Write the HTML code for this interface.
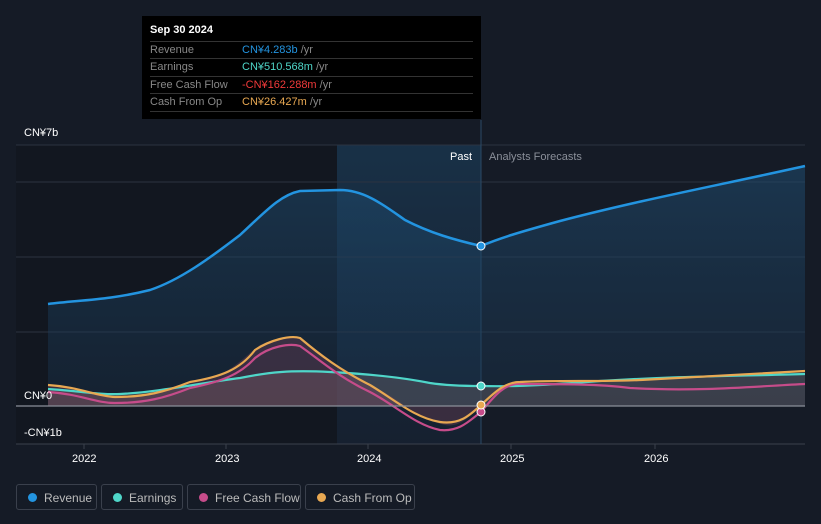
<!DOCTYPE html>
<html><head><meta charset="utf-8"><style>
body{margin:0;background:#151b26;width:821px;height:524px;overflow:hidden;font-family:"Liberation Sans",sans-serif}
svg{position:absolute;left:0;top:0}
.tt{position:absolute;left:142px;top:16px;width:339px;height:103px;background:#000;color:#fff;font-size:11px}
.tt .h{position:absolute;left:8px;top:8px;font-weight:bold;font-size:11px}
.row{position:absolute;left:8px;width:323px;height:17px;border-top:1px solid #333;color:#888;line-height:17px}
.row span{position:absolute;left:92px}
.lg{position:absolute;top:484px;height:26px;border:1px solid #3a404c;border-radius:3px;color:#bbb;font-size:12px;line-height:26px;box-sizing:border-box}
.lg i{position:absolute;left:11px;top:8px;width:9px;height:9px;border-radius:50%}
.lg b{font-weight:normal;position:absolute;left:27px}
</style></head><body>
<svg width="821" height="524">
<defs>
<linearGradient id="pg" x1="0" y1="0" x2="0" y2="1"><stop offset="0" stop-color="#1a3a55" stop-opacity=".7"/><stop offset="1" stop-color="#16263a" stop-opacity=".5"/></linearGradient>
<linearGradient id="rv" x1="0" y1="0" x2="0" y2="1"><stop offset="0" stop-color="#1f4c70" stop-opacity=".55"/><stop offset="1" stop-color="#1a3550" stop-opacity=".35"/></linearGradient>
</defs>
<rect x="16" y="145" width="321" height="299" fill="#121720"/>
<rect x="337" y="145" width="144" height="299" fill="url(#pg)"/>
<g stroke="#2c3340" stroke-width="1">
<line x1="16" y1="145" x2="805" y2="145"/><line x1="16" y1="182" x2="805" y2="182"/>
<line x1="16" y1="257" x2="805" y2="257"/><line x1="16" y1="332" x2="805" y2="332"/>
<line x1="16" y1="444" x2="805" y2="444" stroke="#3a404c"/>
</g>
<line x1="481" y1="120" x2="481" y2="444" stroke="#2a4a66"/>
<path d="M48,304 C80,300 110,300 150,290 C180,280 210,258 240,235 C265,212 280,195 300,191 L340,190 C365,190 385,206 405,220 C430,233 455,240 481,246 C500,238 520,232 560,221 C640,200 720,185 805,166 L805,406 L48,406Z" fill="url(#rv)"/>
<path d="M48,304 C80,300 110,300 150,290 C180,280 210,258 240,235 C265,212 280,195 300,191 L340,190 C365,190 385,206 405,220 C430,233 455,240 481,246 C500,238 520,232 560,221 C640,200 720,185 805,166" fill="none" stroke="#2394e0" stroke-width="2.5"/>
<path d="M48,389 C80,391 100,395 120,394 C160,392 200,383 240,378 C270,372 290,370 330,372 C370,374 400,377 430,383 C450,386 470,386 481,386 C520,387 560,384 600,381 C680,376 740,376 805,374 L805,406 L48,406Z" fill="#7a6f73" opacity=".35"/>
<path d="M48,386 C80,388 100,398 120,397 C150,396 170,390 200,380 C230,375 240,360 260,345 C280,336 300,333 310,345 C330,360 350,375 380,390 C400,400 420,420 445,425 C460,428 472,415 481,405 L481,406 L48,406Z" fill="#8a4a60" opacity=".3"/>
<path d="M48,389 C80,391 100,395 120,394 C160,392 200,383 240,378 C270,372 290,370 330,372 C370,374 400,377 430,383 C450,386 470,386 481,386 C520,387 560,384 600,381 C680,376 740,376 805,374" fill="none" stroke="#4fd6c9" stroke-width="2.2"/>
<path d="M48,392 C80,394 95,403 115,403 C145,403 165,398 190,388 C220,382 240,375 255,358 C270,346 290,343 300,346 C320,360 340,378 370,392 C395,405 415,425 440,430 C460,432 470,420 481,412 C495,395 505,383 520,384 C560,384 600,384 630,388 C700,392 760,386 805,384" fill="none" stroke="#c64c8a" stroke-width="2.2"/>
<path d="M48,385 C80,387 95,396 115,397 C145,397 165,392 190,382 C220,377 240,370 255,350 C270,340 290,335 300,338 C320,355 340,370 370,385 C395,400 415,418 440,422 C460,425 470,415 481,405 C495,392 505,382 520,382 C560,380 600,382 640,380 C700,377 760,373 805,371" fill="none" stroke="#e8a852" stroke-width="2.2"/>
<line x1="16" y1="406" x2="805" y2="406" stroke="#8a8f99" stroke-width="1.2"/>
<circle cx="481" cy="246" r="4" fill="#2394e0" stroke="#fff" stroke-width="1"/>
<circle cx="481" cy="386" r="4" fill="#4fd6c9" stroke="#fff" stroke-width="1"/>
<circle cx="481" cy="412" r="4" fill="#c64c8a" stroke="#fff" stroke-width="1"/>
<circle cx="481" cy="405" r="4" fill="#e8a852" stroke="#fff" stroke-width="1"/>
<g fill="#fff" font-size="11">
<text x="24" y="136">CN¥7b</text><text x="24" y="399">CN¥0</text><text x="24" y="436">-CN¥1b</text>
<text x="450" y="160">Past</text><text x="489" y="160" fill="#8a8f99">Analysts Forecasts</text>
<text x="72" y="462">2022</text><text x="215" y="462">2023</text><text x="357" y="462">2024</text><text x="500" y="462">2025</text><text x="644" y="462">2026</text>
</g>
<g stroke="#3a404c"><line x1="84" y1="444" x2="84" y2="449"/><line x1="226" y1="444" x2="226" y2="449"/><line x1="368" y1="444" x2="368" y2="449"/><line x1="511" y1="444" x2="511" y2="449"/><line x1="655" y1="444" x2="655" y2="449"/></g>
</svg>
<div class="tt"><div class="h">Sep 30 2024</div>
<div class="row" style="top:25px">Revenue<span><em style="font-style:normal;color:#2394e0">CN¥4.283b</em> /yr</span></div>
<div class="row" style="top:42px">Earnings<span><em style="font-style:normal;color:#4fd6c9">CN¥510.568m</em> /yr</span></div>
<div class="row" style="top:60px">Free Cash Flow<span><em style="font-style:normal;color:#f03a3a">-CN¥162.288m</em> /yr</span></div>
<div class="row" style="top:77px;border-bottom:1px solid #333">Cash From Op<span><em style="font-style:normal;color:#e8a852">CN¥26.427m</em> /yr</span></div>
</div>
<div class="lg" style="left:16px;width:81px"><i style="background:#2394e0"></i><b>Revenue</b></div>
<div class="lg" style="left:101px;width:82px"><i style="background:#4fd6c9"></i><b>Earnings</b></div>
<div class="lg" style="left:187px;width:114px"><i style="background:#c64c8a"></i><b>Free Cash Flow</b></div>
<div class="lg" style="left:305px;width:110px"><i style="background:#e8a852"></i><b>Cash From Op</b></div>
</body></html>
